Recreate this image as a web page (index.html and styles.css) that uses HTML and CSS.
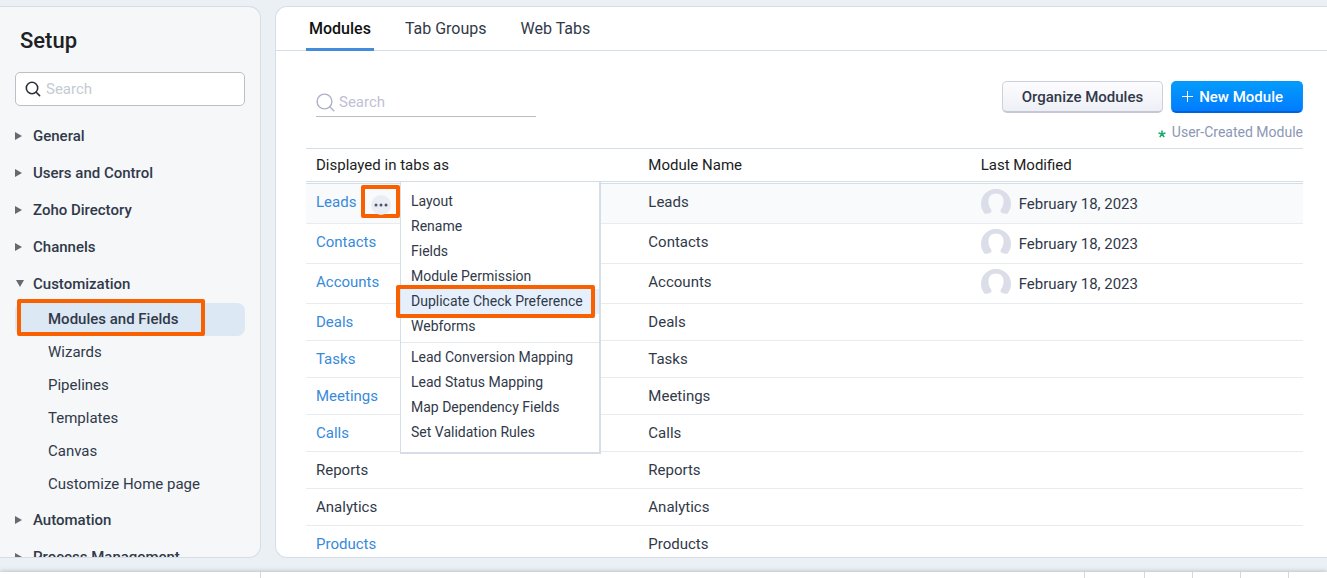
FILE: index.html
```html
<!DOCTYPE html>
<html lang="en">
<head>
    <meta charset="UTF-8">
    <meta name="viewport" content="width=device-width, initial-scale=1.0">
    <title>Setup - Modules and Fields</title>
    <link rel="stylesheet" href="styles.css">
</head>
<body>
    <div class="workspace">
        <aside class="sidebar">
            <h1>Setup</h1>
            <div class="sidebar-search">
                <svg width="16" height="16" viewBox="0 0 16 16" fill="none" stroke="#2b2f3a" stroke-width="1.6" stroke-linecap="round" aria-hidden="true">
                    <circle cx="7" cy="7" r="5.7"/>
                    <path d="M11.2 11.2 14.6 14.6"/>
                </svg>
                <input type="search" placeholder="Search" aria-label="Search setup">
            </div>
            <nav>
                <button class="group" type="button"><span class="arrow"></span>General</button>
                <button class="group" type="button"><span class="arrow"></span>Users and Control</button>
                <button class="group" type="button"><span class="arrow"></span>Zoho Directory</button>
                <button class="group" type="button"><span class="arrow"></span>Channels</button>
                <button class="group open" type="button"><span class="arrow"></span>Customization</button>
                <ul class="sub-list">
                    <li class="active"><a href="#">Modules and Fields</a><span class="marker"></span></li>
                    <li><a href="#">Wizards</a></li>
                    <li><a href="#">Pipelines</a></li>
                    <li><a href="#">Templates</a></li>
                    <li><a href="#">Canvas</a></li>
                    <li><a href="#">Customize Home page</a></li>
                </ul>
                <button class="group" type="button"><span class="arrow"></span>Automation</button>
                <button class="group" type="button"><span class="arrow"></span>Process Management</button>
            </nav>
        </aside>

        <main class="content">
            <nav class="tabs">
                <a class="active" href="#">Modules</a>
                <a href="#">Tab Groups</a>
                <a href="#">Web Tabs</a>
            </nav>

            <div class="panel">
                <div class="toolbar">
                    <div class="module-search">
                        <svg width="19" height="19" viewBox="0 0 19 19" fill="none" stroke="#aeb0c8" stroke-width="1.4" stroke-linecap="round" aria-hidden="true">
                            <circle cx="8.5" cy="8.5" r="7.4"/>
                            <path d="M14 14 17.8 17.8"/>
                        </svg>
                        <input type="search" placeholder="Search" aria-label="Search modules">
                    </div>
                    <div class="actions">
                        <div class="buttons">
                            <button class="btn" type="button">Organize Modules</button>
                            <button class="btn btn-primary" type="button">
                                <svg width="11" height="11" viewBox="0 0 11 11" stroke="#fff" aria-hidden="true">
                                    <path d="M5.5 0V11M0 5.5H11"/>
                                </svg>
                                New Module
                            </button>
                        </div>
                        <p class="legend">
                            <svg width="8" height="12" viewBox="0 -4 8 12" stroke="#1cab6e" stroke-width="1.6" aria-hidden="true">
                                <path d="M4 4V.4M4 4 7.5 2.9M4 4 6.2 7.1M4 4 1.8 7.1M4 4 .5 2.9"/>
                            </svg>
                            User-Created Module
                        </p>
                    </div>
                </div>

                <table class="modules">
                    <thead>
                        <tr>
                            <th>Displayed in tabs as</th>
                            <th>Module Name</th>
                            <th>Last Modified</th>
                        </tr>
                    </thead>
                    <tbody>
                        <tr class="selected">
                            <td class="has-menu">
                                <a href="#">Leads</a>
                                <button class="more" type="button" aria-label="More actions"><span>
                                    <svg width="14" height="4" viewBox="0 0 14 4" fill="#4c5468" aria-hidden="true">
                                        <circle cx="2" cy="2" r="1.5"/>
                                        <circle cx="7" cy="2" r="1.5"/>
                                        <circle cx="12" cy="2" r="1.5"/>
                                    </svg>
                                </span></button>
                                <ul class="menu">
                                    <li><a href="#">Layout</a></li>
                                    <li><a href="#">Rename</a></li>
                                    <li><a href="#">Fields</a></li>
                                    <li><a href="#">Module Permission</a></li>
                                    <li class="hover"><a href="#">Duplicate Check Preference</a><span class="marker"></span></li>
                                    <li><a href="#">Webforms</a></li>
                                    <li class="divider"><a href="#">Lead Conversion Mapping</a></li>
                                    <li><a href="#">Lead Status Mapping</a></li>
                                    <li><a href="#">Map Dependency Fields</a></li>
                                    <li><a href="#">Set Validation Rules</a></li>
                                </ul>
                            </td>
                            <td>Leads</td>
                            <td>
                                <div class="modified">
                                    <svg class="avatar" viewBox="0 0 30 30" aria-hidden="true"><use href="#person"/></svg>
                                    February 18, 2023
                                </div>
                            </td>
                        </tr>
                        <tr>
                            <td><a href="#">Contacts</a></td>
                            <td>Contacts</td>
                            <td>
                                <div class="modified">
                                    <svg class="avatar" viewBox="0 0 30 30" aria-hidden="true"><use href="#person"/></svg>
                                    February 18, 2023
                                </div>
                            </td>
                        </tr>
                        <tr>
                            <td><a href="#">Accounts</a></td>
                            <td>Accounts</td>
                            <td>
                                <div class="modified">
                                    <svg class="avatar" viewBox="0 0 30 30" aria-hidden="true"><use href="#person"/></svg>
                                    February 18, 2023
                                </div>
                            </td>
                        </tr>
                        <tr><td><a href="#">Deals</a></td><td>Deals</td><td></td></tr>
                        <tr><td><a href="#">Tasks</a></td><td>Tasks</td><td></td></tr>
                        <tr><td><a href="#">Meetings</a></td><td>Meetings</td><td></td></tr>
                        <tr><td><a href="#">Calls</a></td><td>Calls</td><td></td></tr>
                        <tr><td>Reports</td><td>Reports</td><td></td></tr>
                        <tr><td>Analytics</td><td>Analytics</td><td></td></tr>
                        <tr><td><a href="#">Products</a></td><td>Products</td><td></td></tr>
                    </tbody>
                </table>
            </div>
        </main>
    </div>

    <footer class="bottom-bar">
        <div class="dock-left"></div>
        <div class="dock-wide"></div>
        <div class="dock dock-first"></div>
        <div class="dock"></div>
        <div class="dock"></div>
        <div class="dock"></div>
    </footer>

    <svg width="0" height="0" class="symbols" aria-hidden="true">
        <symbol id="person" viewBox="0 0 30 30">
            <path fill="#dbdee8" d="M4 25A15 15 0 1 1 26 25C24.500 24.800 22 24.500 20.500 23.700C19.300 23 19.300 21.500 20 20.200C21.800 18 22.500 15.500 22.500 12C22.500 7.200 19.500 4.500 15 4.500S7.500 7.200 7.500 12C7.500 15.500 8.200 18 10 20.200C10.700 21.500 10.700 23 9.500 23.700C8 24.500 5.500 24.800 4 25Z"/>
        </symbol>
    </svg>
</body>
</html>
```
FILE: styles.css
```css
* {
    box-sizing: border-box;
}
body {
    margin: 0;
    height: 100vh;
    display: flex;
    flex-direction: column;
    overflow: hidden;
    background: #ebf0f4;
    color: #313949;
    font-family: Roboto, "Liberation Sans", sans-serif;
    font-size: 15px;
}
a {
    color: inherit;
    text-decoration: none;
}
ul {
    margin: 0;
    padding: 0;
    list-style: none;
}
button, input {
    font: inherit;
    color: inherit;
}
.symbols {
    position: absolute;
}

.workspace {
    flex: 1;
    min-height: 0;
    display: flex;
    gap: 14px;
    padding: 6px 0 14px;
}

/* Sidebar */
.sidebar {
    flex: 0 0 261px;
    overflow: hidden;
    padding: 0 15px;
    background: #f5f7f9;
    border: 1px solid #d5dde8;
    border-left: 0;
    border-radius: 0 12px 12px 0;
}
.sidebar h1 {
    margin: 20px 5px 17px;
    font-size: 22px;
    font-weight: 500;
    line-height: 28px;
    color: #1d2025;
}
.sidebar-search {
    display: flex;
    align-items: center;
    gap: 5px;
    height: 34px;
    margin-bottom: 11px;
    padding: 0 9px;
    background: #fff;
    border: 1px solid #bcc0c6;
    border-radius: 5px;
}
.sidebar-search input, .module-search input {
    flex: 1;
    min-width: 0;
    padding: 0;
    border: 0;
    outline: 0;
    background: none;
}
.sidebar-search input::placeholder {
    color: #c5cad3;
}
.group {
    display: flex;
    align-items: center;
    gap: 8px;
    width: 100%;
    height: 37px;
    padding: 0;
    border: 0;
    background: none;
    font-weight: 500;
    text-align: left;
}
.arrow {
    width: 10px;
    display: flex;
}
.arrow::before {
    content: "";
    border-left: 7px solid #66696f;
    border-top: 4px solid transparent;
    border-bottom: 4px solid transparent;
}
.open .arrow::before {
    margin-left: 1px;
    border-top: 7px solid #66696f;
    border-left: 4px solid transparent;
    border-right: 4px solid transparent;
    border-bottom: 0;
}
.sub-list {
    padding-top: 1px;
}
.sub-list li {
    position: relative;
    border-radius: 8px;
}
.sub-list a {
    display: block;
    padding-left: 33px;
    line-height: 33px;
}
.sub-list .active {
    background: #dce8f4;
    font-weight: 500;
}

/* Orange call-out boxes */
.marker {
    position: absolute;
    border: 4px solid #f86000;
    border-radius: 2px;
    pointer-events: none;
}
.sub-list .marker {
    top: -4px;
    right: 40px;
    bottom: 0;
    left: 2px;
}

/* Content */
.content {
    flex: 1;
    min-width: 0;
    overflow: hidden;
    background: #fff;
    border: 1px solid #d5dde8;
    border-right: 0;
    border-radius: 12px 0 0 12px;
}
.tabs {
    display: flex;
    gap: 28px;
    height: 44px;
    padding: 0 30px;
    border-bottom: 1px solid #d5dde8;
    font-size: 16px;
    line-height: 44px;
}
.tabs a {
    height: 44px;
    padding: 0 3px;
}
.tabs .active {
    border-bottom: 3px solid #438cdb;
    border-radius: 2px 2px 0 0;
    color: #111;
    font-weight: 500;
}
.panel {
    padding: 30px 24px 0 30px;
}
.toolbar {
    display: flex;
    justify-content: space-between;
    align-items: flex-start;
}
.module-search {
    display: flex;
    align-items: center;
    gap: 4px;
    width: 220px;
    height: 31px;
    margin: 5px 0 0 10px;
    padding-top: 2px;
    border-bottom: 1px solid #b9bdc4;
}
.module-search input::placeholder {
    color: #bfc0d4;
}
.buttons {
    display: flex;
    gap: 8px;
}
.btn {
    display: flex;
    align-items: center;
    justify-content: center;
    gap: 6px;
    height: 32px;
    padding: 0 19px;
    border: 1px solid #cdd0da;
    border-bottom: 2px solid #c4c8d3;
    border-radius: 5px;
    background: linear-gradient(#fdfdff, #eeeff6);
    font-weight: 500;
}
.btn-primary {
    padding-left: 10px;
    border-color: #0a93fb;
    border-bottom-color: #0064d8;
    background: linear-gradient(#049bfb, #007cff);
    color: #fff;
}
.legend {
    display: flex;
    justify-content: flex-end;
    align-items: center;
    gap: 6px;
    margin: 9px 0 6px;
    font-size: 14px;
    line-height: 20px;
    color: #8c97b4;
}

/* Modules table */
.modules {
    width: 100%;
    table-layout: fixed;
    border-spacing: 0;
    border-top: 1px solid #d3dfe5;
}
.modules th {
    padding: 0 10px;
    border-bottom: 3px double #d3dfe5;
    color: #1b1d22;
    font-weight: 400;
    line-height: 32px;
    text-align: left;
}
.modules td {
    padding: 0 10px;
    border-bottom: 1px solid #e9ecef;
    line-height: 36px;
    vertical-align: top;
}
.modules td > a {
    color: #388ada;
}
.selected td {
    background: #f8fafb;
}
.modified {
    display: flex;
    align-items: center;
    gap: 8px;
    height: 39px;
}
.avatar {
    width: 30px;
    height: 30px;
}
.has-menu {
    position: relative;
}
.more {
    position: absolute;
    top: 1px;
    left: 55px;
    display: flex;
    justify-content: center;
    width: 39px;
    height: 33px;
    padding: 6px 0 0;
    border: 4px solid #f86000;
    border-radius: 2px;
    background: none;
}
.more span {
    display: flex;
    align-items: center;
    justify-content: center;
    width: 20px;
    height: 20px;
    border-radius: 50%;
    background: #eaedf3;
}
.menu {
    position: absolute;
    top: -3px;
    left: 94px;
    z-index: 1;
    width: 201px;
    padding: 7px 0;
    background: #fff;
    border: 1px solid #d5dee6;
    border-width: 1px 2px 2px 1px;
    font-size: 14px;
    line-height: 25px;
}
.menu li {
    position: relative;
}
.menu a {
    display: block;
    padding-left: 10px;
}
.menu .hover {
    background: #e6f0fc;
}
.menu .divider {
    margin-top: 3px;
    padding-top: 2px;
    border-top: 1px solid #e3eaf0;
}
.menu .marker {
    top: -4px;
    right: 4px;
    bottom: -4px;
    left: -5px;
}

/* Bottom bar */
.bottom-bar {
    display: flex;
    height: 6px;
    background: #fff;
    box-shadow: 0 -1px 4px rgba(0, 0, 0, 0.2);
}
.bottom-bar div {
    border-right: 1px solid #d8d8d8;
}
.dock-left {
    width: 261px;
}
.dock-wide {
    flex: 1;
}
.dock {
    width: 48px;
}
.dock-first {
    width: 60px;
}
.dock:last-child {
    margin-right: 38px;
}
```
